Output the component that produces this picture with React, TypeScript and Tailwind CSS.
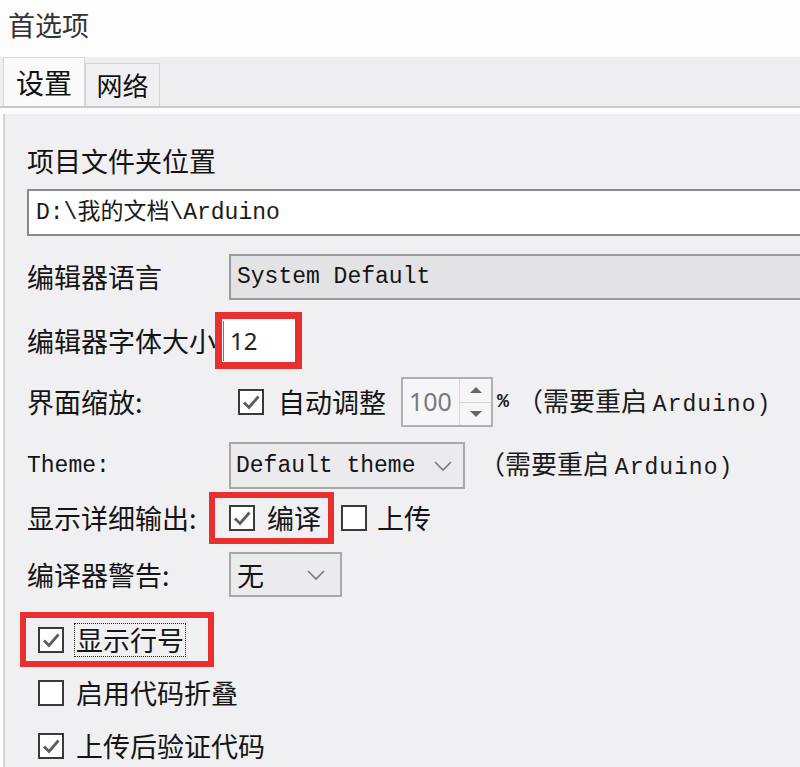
import React from "react";

const sans = { fontFamily: '"Noto Sans CJK SC", "Noto Sans", sans-serif' };
const mono = { fontFamily: '"Liberation Mono", "Noto Sans CJK SC", monospace' };

function Check({ checked }: { checked: boolean }) {
  return (
    <span className="w-[26px] h-[26px] shrink-0 border-2 border-[#3a3a3a] bg-white flex items-center justify-center">
      {checked && (
        <svg width="20" height="20" viewBox="0 0 20 20">
          <path d="M3 10.5 L8 15.5 L17.5 4.5" stroke="#5e5e5e" strokeWidth="2.8" fill="none" />
        </svg>
      )}
    </span>
  );
}

function Chevron() {
  return (
    <svg width="20" height="12" viewBox="0 0 20 12">
      <path d="M2 2 L10 10 L18 2" stroke="#7a7a7a" strokeWidth="1.6" fill="none" />
    </svg>
  );
}

function Restart() {
  return (
    <span className="text-[26px] leading-[34px] text-[#1a1a1a] whitespace-nowrap">
      （需要重启 <span style={mono} className="text-[23px] tracking-[1px]">Arduino)</span>
    </span>
  );
}

export default function App() {
  return (
    <div className="w-[800px] h-[767px] bg-[#fdfdfd] overflow-hidden text-[#141414]" style={sans}>
      {/* Title */}
      <div className="h-[57px] pl-[8px] pt-[7px] text-[27px] leading-[36px] text-[#333]">首选项</div>

      {/* Tabs */}
      <div className="h-[51px] bg-[#eeeef0] border-b-2 border-[#c9c9cb] flex items-end pl-[3px]">
        <div className="w-[82px] h-[49px] bg-[#fafafa] border border-b-0 border-[#d6d6d6] flex items-center justify-center text-[28px] leading-[34px] text-[#111]">
          设置
        </div>
        <div className="w-[75px] h-[43px] bg-[#f0f0f2] border border-b-0 border-[#d6d6d6] flex items-center justify-center text-[26px] leading-[34px] text-[#111]">
          网络
        </div>
      </div>

      {/* White gap */}
      <div className="h-[6px] bg-[#fcfcfc]" />

      {/* Panel */}
      <div className="ml-[3px] border-l-2 border-[#d4d4d6] bg-[#f0f0f2] h-[660px] pl-[22px] flex flex-col">
        <div className="h-[40px] mt-[27px] flex items-center text-[27px] leading-[36px]">项目文件夹位置</div>

        <div className="mt-[8px] h-[47px] bg-white border-y-2 border-l-2 border-[#8a8a8a] flex items-center pl-[7px]">
          <span style={mono} className="text-[23px] leading-[30px] text-[#1a1a1a]">
            D:\我的文档\Arduino
          </span>
        </div>

        <div className="mt-[18px] h-[46px] flex items-center">
          <div className="w-[202px] text-[27px] leading-[36px]">编辑器语言</div>
          <div className="flex-1 h-[46px] bg-[#e3e3e5] border-y-2 border-l-2 border-[#9a9a9a] flex items-center pl-[6px]">
            <span style={mono} className="text-[23px] leading-[30px]">System Default</span>
          </div>
        </div>

        <div className="mt-[12px] h-[57px] flex items-center">
          <div className="w-[188px] text-[27px] leading-[36px] whitespace-nowrap">编辑器字体大小</div>
          <div className="w-[87px] h-[57px] border-[7px] border-[#e8302f] bg-white flex items-center">
            <span className="w-[1px] h-[40px] bg-[#6a7a9a] ml-[1px]" />
            <span className="ml-[6px] text-[24px] leading-[30px] text-[#222]" style={{ fontFamily: '"Noto Sans", sans-serif' }}>12</span>
          </div>
        </div>

        <div className="mt-[8px] h-[50px] flex items-center">
          <div className="w-[211px] text-[27px] leading-[36px] whitespace-nowrap">界面缩放:</div>
          <Check checked />
          <span className="ml-[14px] text-[27px] leading-[36px]">自动调整</span>
          <div className="ml-[15px] w-[92px] h-[50px] border-2 border-[#b0b0b2] bg-[#f6f6f8] flex items-stretch">
            <div className="flex-1 flex items-center pl-[6px] text-[25px] text-[#7a7a7a]" style={{ fontFamily: '"Noto Sans", sans-serif' }}>100</div>
            <div className="w-[32px] border-l border-[#d4d4d6] flex flex-col">
              <div className="flex-1 flex items-center justify-center border-b border-[#d4d4d6]">
                <svg width="14" height="8" viewBox="0 0 14 8"><path d="M1 7 L7 1 L13 7 Z" fill="#666" /></svg>
              </div>
              <div className="flex-1 flex items-center justify-center">
                <svg width="14" height="8" viewBox="0 0 14 8"><path d="M1 1 L7 7 L13 1 Z" fill="#666" /></svg>
              </div>
            </div>
          </div>
          <span className="ml-[4px] text-[20px] font-bold" style={mono}>%</span>
          <span className="ml-[8px]"><Restart /></span>
        </div>

        <div className="mt-[15px] h-[47px] flex items-center">
          <div className="w-[202px] text-[23px] leading-[30px]" style={mono}>Theme:</div>
          <div className="w-[236px] h-[47px] bg-[#ebebed] border-2 border-[#a8a8aa] flex items-center pl-[5px] pr-[10px] justify-between">
            <span style={mono} className="text-[23px] leading-[30px]">Default theme</span>
            <Chevron />
          </div>
          <span className="ml-[14px]"><Restart /></span>
        </div>

        <div className="mt-[3px] h-[52px] flex items-center">
          <div className="w-[182px] text-[27px] leading-[36px] whitespace-nowrap">显示详细输出:</div>
          <div className="h-[52px] border-[6px] border-[#e8302f] flex items-center pl-[14px] pr-[7px]">
            <Check checked />
            <span className="ml-[12px] text-[27px] leading-[36px]">编译</span>
          </div>
          <span className="ml-[7px]"><Check checked={false} /></span>
          <span className="ml-[10px] text-[27px] leading-[36px]">上传</span>
        </div>

        <div className="mt-[8px] h-[45px] flex items-center">
          <div className="w-[202px] text-[27px] leading-[36px] whitespace-nowrap">编译器警告:</div>
          <div className="w-[113px] h-[45px] bg-[#ebebed] border-2 border-[#a8a8aa] flex items-center pl-[6px] pr-[14px] justify-between">
            <span className="text-[27px] leading-[36px]">无</span>
            <Chevron />
          </div>
        </div>

        <div className="mt-[15px] h-[55px] flex items-center">
          <div className="-ml-[7px] w-[194px] h-[55px] border-[6px] border-[#e8302f] flex items-center pl-[12px]">
            <Check checked />
            <span className="ml-[10px] border border-dotted border-[#222] px-[1px] text-[27px] leading-[32px]">显示行号</span>
          </div>
        </div>

        <div className="h-[52px] flex items-center pl-[11px]">
          <Check checked={false} />
          <span className="ml-[12px] text-[27px] leading-[36px]">启用代码折叠</span>
        </div>

        <div className="h-[54px] flex items-center pl-[11px]">
          <Check checked />
          <span className="ml-[12px] text-[27px] leading-[36px]">上传后验证代码</span>
        </div>
      </div>
    </div>
  );
}
